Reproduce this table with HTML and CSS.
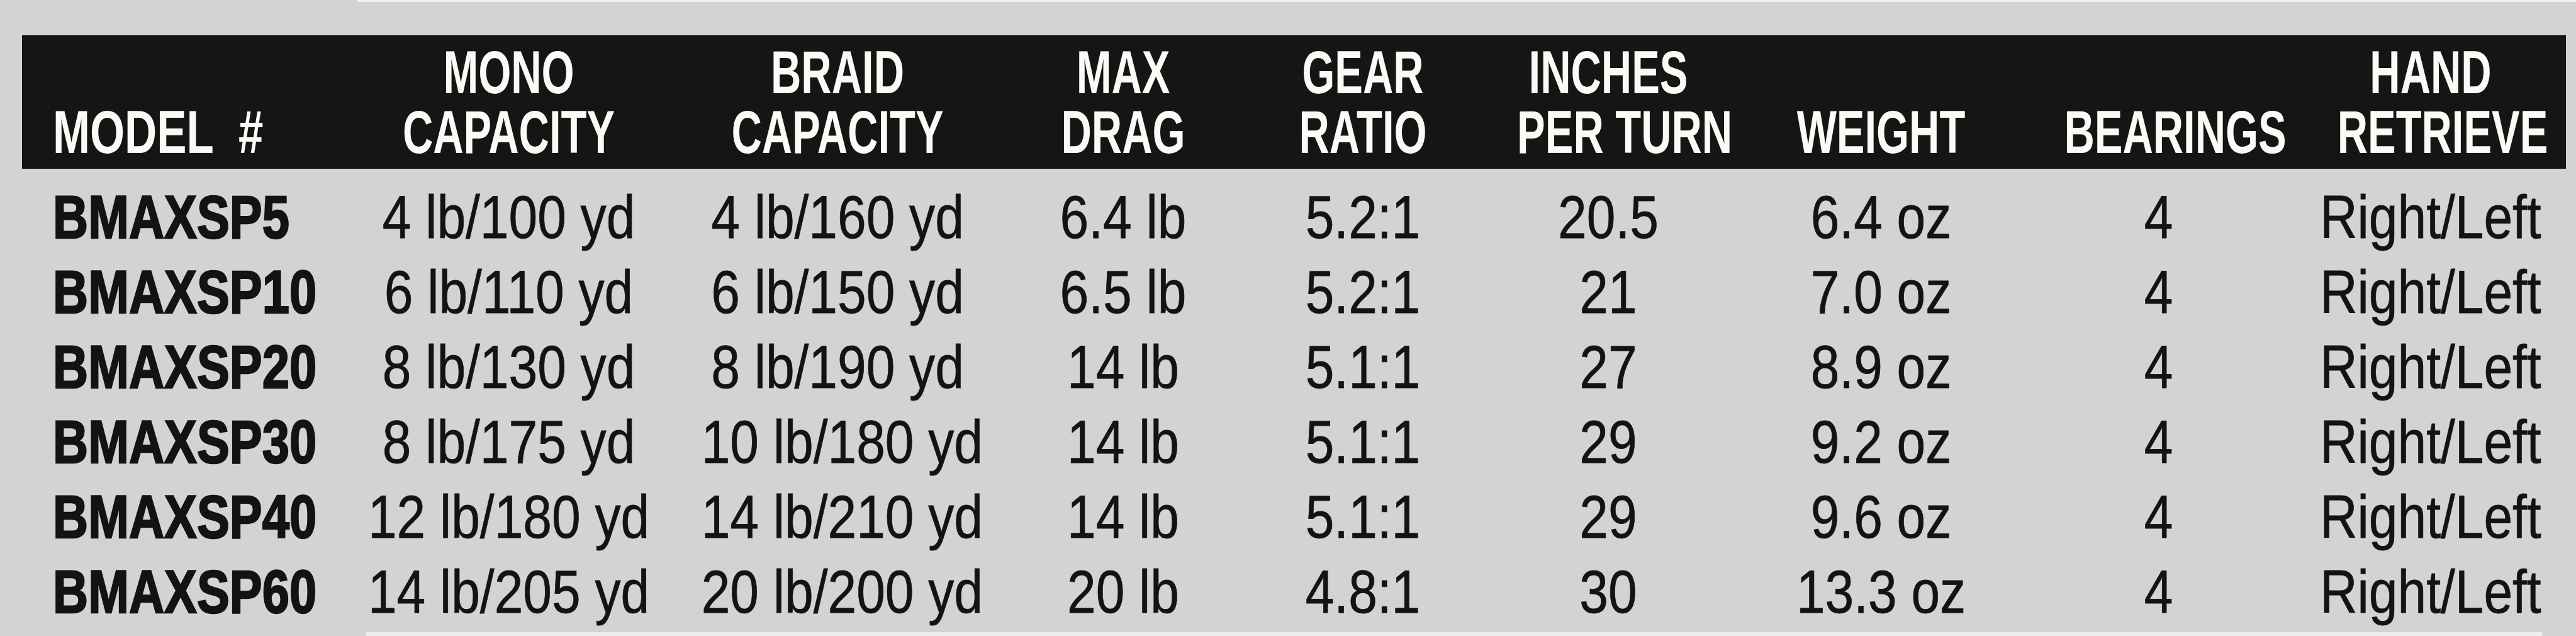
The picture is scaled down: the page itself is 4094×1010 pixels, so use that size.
FILE: index.html
```html
<!DOCTYPE html>
<html lang="en">
<head>
<meta charset="utf-8">
<title>BMAXSP Spinning Reel Specifications</title>
<link rel="stylesheet" href="styles.css">
</head>
<body>
<div class="page">
  <div class="edge-top"></div>
  <div class="specs">
    <div class="row head">
      <div class="cell model">MODEL&nbsp;&nbsp;#</div>
      <div class="cell">MONO<br>CAPACITY</div>
      <div class="cell">BRAID<br>CAPACITY</div>
      <div class="cell">MAX<br>DRAG</div>
      <div class="cell">GEAR<br>RATIO</div>
      <div class="cell">INCHES<br>PER TURN</div>
      <div class="cell">WEIGHT</div>
      <div class="cell">BEARINGS</div>
      <div class="cell">HAND<br>RETRIEVE</div>
    </div>
    <div class="body">
      <div class="row">
        <div class="cell model">BMAXSP5</div>
        <div class="cell">4 lb/100 yd</div>
        <div class="cell">4 lb/160 yd</div>
        <div class="cell">6.4 lb</div>
        <div class="cell">5.2:1</div>
        <div class="cell">20.5</div>
        <div class="cell">6.4 oz</div>
        <div class="cell">4</div>
        <div class="cell">Right/Left</div>
      </div>
      <div class="row">
        <div class="cell model">BMAXSP10</div>
        <div class="cell">6 lb/110 yd</div>
        <div class="cell">6 lb/150 yd</div>
        <div class="cell">6.5 lb</div>
        <div class="cell">5.2:1</div>
        <div class="cell">21</div>
        <div class="cell">7.0 oz</div>
        <div class="cell">4</div>
        <div class="cell">Right/Left</div>
      </div>
      <div class="row">
        <div class="cell model">BMAXSP20</div>
        <div class="cell">8 lb/130 yd</div>
        <div class="cell">8 lb/190 yd</div>
        <div class="cell">14 lb</div>
        <div class="cell">5.1:1</div>
        <div class="cell">27</div>
        <div class="cell">8.9 oz</div>
        <div class="cell">4</div>
        <div class="cell">Right/Left</div>
      </div>
      <div class="row">
        <div class="cell model">BMAXSP30</div>
        <div class="cell">8 lb/175 yd</div>
        <div class="cell">10 lb/180 yd</div>
        <div class="cell">14 lb</div>
        <div class="cell">5.1:1</div>
        <div class="cell">29</div>
        <div class="cell">9.2 oz</div>
        <div class="cell">4</div>
        <div class="cell">Right/Left</div>
      </div>
      <div class="row">
        <div class="cell model">BMAXSP40</div>
        <div class="cell">12 lb/180 yd</div>
        <div class="cell">14 lb/210 yd</div>
        <div class="cell">14 lb</div>
        <div class="cell">5.1:1</div>
        <div class="cell">29</div>
        <div class="cell">9.6 oz</div>
        <div class="cell">4</div>
        <div class="cell">Right/Left</div>
      </div>
      <div class="row">
        <div class="cell model">BMAXSP60</div>
        <div class="cell">14 lb/205 yd</div>
        <div class="cell">20 lb/200 yd</div>
        <div class="cell">20 lb</div>
        <div class="cell">4.8:1</div>
        <div class="cell">30</div>
        <div class="cell">13.3 oz</div>
        <div class="cell">4</div>
        <div class="cell">Right/Left</div>
      </div>
    </div>
  </div>
  <div class="edge-bottom"></div>
</div>
</body>
</html>
```

FILE: styles.css
```css
html, body {
  margin: 0;
  padding: 0;
  background: #d3d3d3;
}

.page {
  width: 4094px;
  height: 1010px;
  overflow: hidden;
  background: #d3d3d3;
  font-family: "Liberation Sans", Arial, sans-serif;
  color: #141212;
}

.edge-top {
  height: 3px;
  margin-left: 568px;
  background: #f2f2f2;
}

.specs {
  margin-top: 53px;
  margin-left: 35px;
  width: 4043px;
}

.row {
  display: grid;
  grid-template-columns: 504px 539px 506px 402px 360px 420px 447px 435px 430px;
  align-items: end;
}

.cell {
  text-align: center;
  white-space: nowrap;
  transform-origin: center;
}

.cell.model {
  text-align: left;
  padding-left: 49px;
  transform-origin: 49px 50%;
}

.head {
  background: #161414;
  color: #fbfaf5;
  padding: 11px 0;
  font-size: 97px;
  font-weight: bold;
  line-height: 95px;
}

.head .cell {
  transform: scaleX(0.69);
}

.head .cell.model {
  transform: scaleX(0.73);
}

.body {
  padding-top: 17px;
}

.body .row {
  height: 119px;
  font-size: 96px;
  line-height: 119px;
}

.body .cell {
  transform: scaleX(0.855);
  -webkit-text-stroke: 0.8px #141212;
}

.body .cell.model {
  font-weight: bold;
  transform: scaleX(0.81);
  -webkit-text-stroke: 2.5px #141212;
}

.edge-bottom {
  margin-top: 5px;
  margin-left: 582px;
  width: 3458px;
  height: 6px;
  background: #eeeeee;
}
```
